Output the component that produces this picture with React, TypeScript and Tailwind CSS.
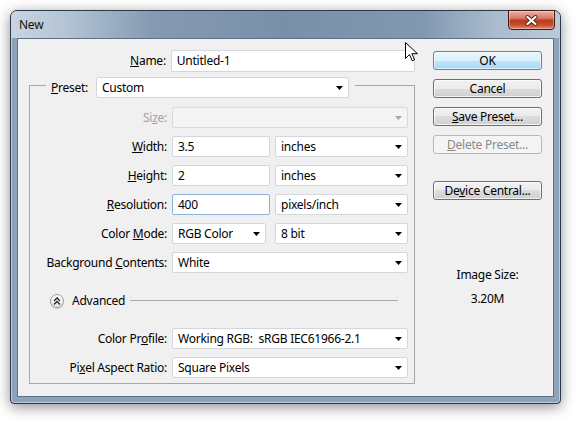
import React from 'react';

const Arrow = ({ disabled }: { disabled?: boolean }) => (
  <svg width="7" height="4" viewBox="0 0 7 4" className="shrink-0">
    <path d="M0 0h7L3.5 4z" fill={disabled ? '#a8a8a8' : '#000'} />
  </svg>
);

interface FieldProps {
  value?: string;
  w: string;
  disabled?: boolean;
  focused?: boolean;
}

const Select: React.FC<FieldProps> = ({ value, w, disabled }) => (
  <div
    className={`${w} h-[21px] shrink-0 flex items-center justify-between border rounded-[2px] pl-[5px] pr-[5px] ${
      disabled ? 'bg-[#f4f4f4] border-[#d9d9d9]' : 'bg-white border-[#d3d6db]'
    }`}
  >
    <span className="truncate whitespace-pre">{value}</span>
    <Arrow disabled={disabled} />
  </div>
);

const Input: React.FC<FieldProps> = ({ value, w, focused }) => (
  <div
    className={`${w} h-[21px] shrink-0 flex items-center border rounded-[2px] pl-[5px] bg-white ${
      focused ? 'border-[#8cb3dc]' : 'border-[#d3d6db]'
    }`}
  >
    {value}
  </div>
);

const Label = ({ children, disabled }: { children: React.ReactNode; disabled?: boolean }) => (
  <span className={`w-[137px] shrink-0 text-right mr-[5px] ${disabled ? 'text-[#a3a3a3]' : 'text-black'}`}>{children}</span>
);

const Row = ({ children, extra = '' }: { children: React.ReactNode; extra?: string }) => (
  <div className={`flex items-center h-[21px] ${extra}`}>{children}</div>
);

const Button = ({ children, variant = 'normal', extra = '' }: { children: React.ReactNode; variant?: 'default' | 'normal' | 'disabled'; extra?: string }) => {
  const styles = {
    default:
      'border-[#3c8dd0] text-black bg-[linear-gradient(#eaf6fd,#d9f0fc_50%,#bee6fd_50%,#a7d9f5)] shadow-[inset_0_0_0_1px_rgba(255,255,255,0.6)]',
    normal:
      'border-[#707070] text-black bg-[linear-gradient(#f2f2f2,#ebebeb_50%,#dddddd_50%,#cfcfcf)] shadow-[inset_0_0_0_1px_rgba(255,255,255,0.7)]',
    disabled: 'border-[#b5b9bc] text-[#8a8a8a] bg-[#f4f4f4]',
  };
  return (
    <div className={`w-[109px] h-[19px] flex items-center justify-center border rounded-[3px] ${styles[variant]} ${extra}`}>
      {children}
    </div>
  );
};

const U = ({ children }: { children: React.ReactNode }) => <span className="underline underline-offset-1">{children}</span>;

export default function App() {
  return (
    <div className="relative w-[579px] h-[422px] bg-white pl-[10px] pt-[10px] font-['Noto_Sans',sans-serif] text-[12px] leading-[16px] tracking-[-0.25px] text-black">
      {/* window */}
      <div className="w-[551px] h-[394px] flex flex-col border border-[#2b3948] rounded-t-[7px] rounded-b-[4px] bg-[#8da3bc] shadow-[inset_0_0_0_1px_rgba(255,255,255,0.45),0_3px_14px_rgba(0,0,0,0.45)]">
        {/* title bar */}
        <div className="h-[27px] shrink-0 flex items-start justify-between rounded-t-[6px] bg-[linear-gradient(90deg,#c9d5e1_0%,#b4c4d4_10%,#8599b2_26%,#7a90aa_50%,#8298b1_75%,#a9bbcd_88%,#bccad8_100%)]">
          <span className="pl-[8px] pt-[6px] text-[12px] text-[#101010]">New</span>
          <div className="w-[47px] h-[20px] -mt-px mr-[5px] flex items-center justify-center border border-[#3e1b14] rounded-b-[4px] bg-[linear-gradient(#e9b1a3,#d77b66_40%,#bd3d1f_52%,#c44a2c_75%,#e08a6e)] shadow-[inset_0_0_0_1px_rgba(255,255,255,0.35)]">
            <svg width="13" height="11" viewBox="0 0 13 11">
              <path d="M2.5 2l8 7M10.5 2l-8 7" stroke="#5a2418" strokeWidth="4" strokeLinecap="round" />
              <path d="M2.5 2l8 7M10.5 2l-8 7" stroke="#fff" strokeWidth="2.2" strokeLinecap="round" />
            </svg>
          </div>
        </div>

        {/* client area */}
        <div className="mx-[6px] h-[359px] flex border border-[#5f7186] bg-[#f0f0f0]">
          {/* left column */}
          <div className="w-[397px] shrink-0 flex flex-col">
            <div className="mt-[11px] flex items-center h-[22px]">
              <span className="w-[149px] text-right mr-[5px]">
                <U>N</U>ame:
              </span>
              <div className="w-[246px] h-[22px] flex items-center border rounded-[2px] pl-[5px] bg-white border-[#d3d6db]">Untitled-1</div>
            </div>

            {/* preset group */}
            <div className="ml-[11px] mt-[13px] w-[386px] h-[299px] flex flex-col border border-[#a8a8a8]">
              <div className="-mt-[9px] ml-[16px] self-start flex items-center bg-[#f0f0f0] pl-[5px] pr-[6px]">
                <span className="w-[40px]">
                  <U>P</U>reset:
                </span>
                <div className="ml-[5px]">
                  <Select value="Custom" w="w-[253px]" />
                </div>
              </div>

              <div className="mt-[9px] flex flex-col gap-[8px]">
                <Row>
                  <Label disabled>
                    Si<U>z</U>e:
                  </Label>
                  <Select w="w-[236px]" disabled />
                </Row>
                <Row>
                  <Label>
                    <U>W</U>idth:
                  </Label>
                  <Input value="3.5" w="w-[98px]" />
                  <div className="ml-[5px]">
                    <Select value="inches" w="w-[133px]" />
                  </div>
                </Row>
                <Row>
                  <Label>
                    <U>H</U>eight:
                  </Label>
                  <Input value="2" w="w-[98px]" />
                  <div className="ml-[5px]">
                    <Select value="inches" w="w-[133px]" />
                  </div>
                </Row>
                <Row>
                  <Label>
                    <U>R</U>esolution:
                  </Label>
                  <Input value="400" w="w-[98px]" focused />
                  <div className="ml-[5px]">
                    <Select value="pixels/inch" w="w-[133px]" />
                  </div>
                </Row>
                <Row>
                  <Label>
                    Color <U>M</U>ode:
                  </Label>
                  <Select value="RGB Color" w="w-[94px]" />
                  <div className="ml-[9px]">
                    <Select value="8 bit" w="w-[133px]" />
                  </div>
                </Row>
                <Row>
                  <Label>
                    Background <U>C</U>ontents:
                  </Label>
                  <Select value="White" w="w-[236px]" />
                </Row>

                <Row extra="mt-[9px]">
                  <div className="ml-[20px] w-[14px] h-[14px] flex items-center justify-center rounded-full border border-[#9a9a9a] bg-[linear-gradient(#ffffff,#e6e6e6)] shadow-[0_1px_1px_rgba(0,0,0,0.15)]">
                    <svg width="8" height="8" viewBox="0 0 8 8">
                      <path d="M1 4l3-3 3 3M1 7.5l3-3 3 3" stroke="#222" strokeWidth="1.3" fill="none" />
                    </svg>
                  </div>
                  <span className="ml-[8px]">Advanced</span>
                  <div className="ml-[5px] mr-[16px] flex-1 h-px bg-[#a8a8a8]" />
                </Row>

                <Row extra="mt-[9px]">
                  <Label>
                    Color Pr<U>o</U>file:
                  </Label>
                  <Select value="Working RGB:  sRGB IEC61966-2.1" w="w-[236px]" />
                </Row>
                <Row>
                  <Label>
                    Pi<U>x</U>el Aspect Ratio:
                  </Label>
                  <Select value="Square Pixels" w="w-[236px]" />
                </Row>
              </div>
            </div>
          </div>

          {/* right column */}
          <div className="ml-[18px] w-[109px] flex flex-col items-center pt-[12px]">
            <Button variant="default">OK</Button>
            <Button extra="mt-[9px]">Cancel</Button>
            <Button extra="mt-[9px]">
              <span>
                <U>S</U>ave Preset...
              </span>
            </Button>
            <Button variant="disabled" extra="mt-[9px]">
              <span>
                <U>D</U>elete Preset...
              </span>
            </Button>
            <Button extra="mt-[27px]">
              <span>
                De<U>v</U>ice Central...
              </span>
            </Button>
            <span className="mt-[67px]">Image Size:</span>
            <span className="mt-[8px]">3.20M</span>
          </div>
        </div>
      </div>

      {/* mouse pointer */}
      <svg className="absolute left-[405px] top-[42px]" width="13" height="21" viewBox="0 0 13 21">
        <path d="M0.5 0.5v16l4-4 2.7 6.3 2.3-1-2.6-6.1h5.6z" fill="#fff" stroke="#000" strokeWidth="1" strokeLinejoin="round" />
      </svg>
    </div>
  );
}
